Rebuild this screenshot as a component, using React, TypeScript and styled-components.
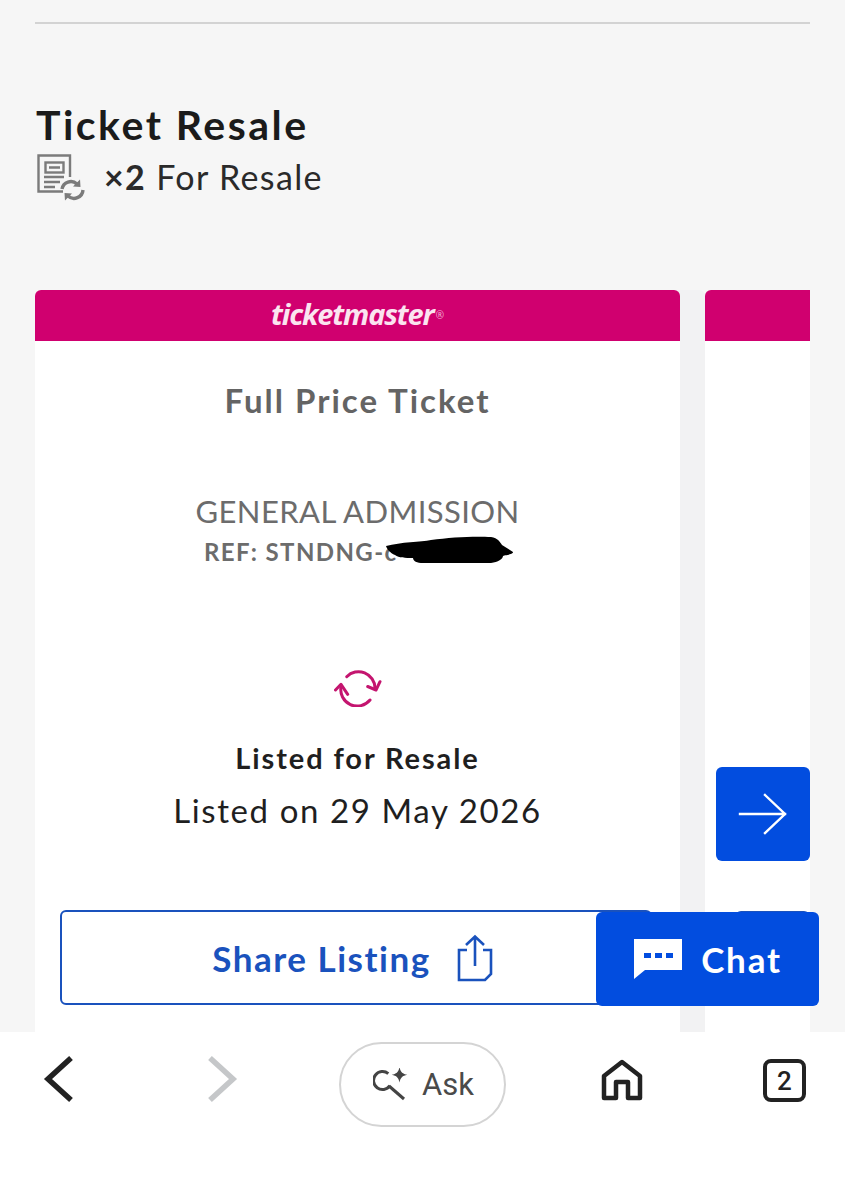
import React from 'react';
import styled, { createGlobalStyle } from 'styled-components';

const GlobalStyle = createGlobalStyle`
  html, body { margin: 0; padding: 0; height: 100%; background: #fff; }
  body { font-family: Lato, "Open Sans", sans-serif; overflow: hidden; }
`;

const ResaleDocIcon = () => (
  <svg width="50" height="50" viewBox="0 0 50 50" fill="none">
    <path d="M27 38.5H2.5V2.5H34V24" stroke="#7b7b7b" strokeWidth="2.4" />
    <rect x="9.5" y="9.5" width="18" height="10" stroke="#7b7b7b" strokeWidth="2.4" />
    <path d="M13 14.5h11M8 24h20M8 29h16M8 34h11" stroke="#7b7b7b" strokeWidth="2.4" />
    <path d="M26 36a9 9 0 0 1 15-5" stroke="#7b7b7b" strokeWidth="3.4" />
    <path d="M37 33.5l7.5 .5-.5-7.5z" fill="#7b7b7b" />
    <path d="M47 37a9 9 0 0 1-15 6" stroke="#7b7b7b" strokeWidth="3.4" />
    <path d="M36 40.5l-7.5-.5 .5 7.5z" fill="#7b7b7b" />
  </svg>
);

const ResaleIcon = () => (
  <svg width="48" height="40" viewBox="0 0 48 40" fill="none" stroke="#c4156f" strokeWidth="3" strokeLinecap="round" strokeLinejoin="round">
    <path d="M12.7 9.700A16.500 16.500 0 0 1 41 21" />
    <path d="M33.700 19.500L42 23l4-8.300" />
    <path d="M7 19.700A16.500 16.500 0 0 0 36 33" />
    <path d="M1.500 23L7 17.300l6.700 10" />
  </svg>
);

const ArrowIcon = () => (
  <svg width="50" height="42" viewBox="0 0 50 42" fill="none" stroke="#fff" strokeWidth="2.4" strokeLinecap="square">
    <path d="M2 21h45M27 2l20 19-20 19" />
  </svg>
);

const ShareIcon = () => (
  <svg width="36" height="48" viewBox="0 0 36 48" fill="none" stroke="#1a52bd" strokeWidth="2.6">
    <path d="M10 16H2v30h26l6-6V16h-8" />
    <path d="M18 32V3M9 11l9-8.500 9 8.500" />
  </svg>
);

const ChatIcon = () => (
  <svg width="50" height="42" viewBox="0 0 50 42">
    <path d="M1 1h48v31H12L1 41z" fill="#fff" />
    <rect x="11" y="15" width="7" height="5" fill="#024ddf" />
    <rect x="22" y="15" width="7" height="5" fill="#024ddf" />
    <rect x="33" y="15" width="7" height="5" fill="#024ddf" />
  </svg>
);

const AskIcon = () => (
  <svg width="35" height="33" viewBox="0 0 35 33" fill="none">
    <path d="M15.300 5.600A9 9 0 1 0 16.900 17.700" stroke="#444" strokeWidth="3" />
    <path d="M16 18L31 31" stroke="#444" strokeWidth="3" />
    <path d="M26.500 -1c1 5 2.800 6.800 7.800 7.800-5 1-6.800 2.800-7.800 7.800-1-5-2.800-6.800-7.800-7.800 5-1 6.800-2.800 7.800-7.800z" fill="#444" />
  </svg>
);

const Chevron = ({ back, color }: { back?: boolean; color: string }) => (
  <svg width="32" height="48" viewBox="0 0 32 48" fill="none" stroke={color} strokeWidth="5.500">
    <path d={back ? 'M28 3L5 24l23 21' : 'M4 3l23 21L4 45'} />
  </svg>
);

const HomeIcon = () => (
  <svg width="42" height="42" viewBox="0 0 42 42" fill="none" stroke="#222" strokeWidth="4.500" strokeLinejoin="round">
    <path d="M3 17L21 3l18 14v22H27V23H15v16H3z" />
  </svg>
);

const Scribble = () => (
  <svg width="130" height="32" viewBox="0 0 130 32">
    <path d="M1 11c15-4 35-4 45-6 20-3 45-4 60-3 7 1 9 5 11 8l11 7c1 3-10 3-10 4 0 3-5 6-12 7H38c-6 0-10-2-10-5-8 0-14 0-18-3C5 18 2 14 1 11z" fill="#000" />
  </svg>
);

export default function App() {
  return (
    <>
      <GlobalStyle />
      <Screen>
        <Main>
          <Divider />
          <Title>Ticket Resale</Title>
          <CountRow>
            <ResaleDocIcon />
            <CountText><b>×2</b> For Resale</CountText>
          </CountRow>
          <Carousel>
            <Card>
              <Brand>
                <BrandName>ticketmaster<Reg>®</Reg></BrandName>
              </Brand>
              <CardBody>
                <TicketType>Full Price Ticket</TicketType>
                <Admission>GENERAL ADMISSION</Admission>
                <RefLine>
                  REF: STNDNG-c
                  <Redaction><Scribble /></Redaction>
                </RefLine>
                <StatusIcon><ResaleIcon /></StatusIcon>
                <StatusTitle>Listed for Resale</StatusTitle>
                <StatusDate>Listed on 29 May 2026</StatusDate>
                <ShareButton>
                  Share Listing
                  <ShareIcon />
                </ShareButton>
              </CardBody>
            </Card>
            <NextCard>
              <Brand />
              <NextCardBody>
                <GhostButton />
              </NextCardBody>
            </NextCard>
            <ArrowButton><ArrowIcon /></ArrowButton>
          </Carousel>
          <ChatButton>
            <ChatIcon />
            Chat
          </ChatButton>
        </Main>
        <BrowserBar>
          <NavSlot><Chevron back color="#222" /></NavSlot>
          <NavSlot><Chevron color="#c5c7c9" /></NavSlot>
          <AskPill>
            <AskIcon />
            Ask
          </AskPill>
          <NavSlot><HomeIcon /></NavSlot>
          <TabCount>2</TabCount>
        </BrowserBar>
      </Screen>
    </>
  );
}

const Screen = styled.div`
  display: flex;
  flex-direction: column;
  height: 1200px;
  overflow: hidden;
`;
const Main = styled.main`
  position: relative;
  height: 1032px;
  flex: none;
  padding: 22px 35px 0;
  box-sizing: border-box;
  background: #f6f6f6;
  overflow: hidden;
`;
const Divider = styled.div`
  height: 2px;
  background: #d3d3d3;
`;
const Title = styled.h1`
  margin: 75px 0 0 1px;
  font-size: 41px;
  line-height: 52px;
  font-weight: 700;
  letter-spacing: 2.5px;
  color: #1b1b1b;
`;
const CountRow = styled.div`
  display: flex;
  align-items: center;
  gap: 18px;
  margin: 2px 0 0 1px;
  height: 50px;
`;
const CountText = styled.span`
  font-size: 34px;
  letter-spacing: 1.35px;
  color: #2a2a2a;
  position: relative;
  top: -2px;
  b { font-weight: 700; }
`;
const Carousel = styled.div`
  position: relative;
  display: flex;
  gap: 25px;
  margin-top: 87px;
  height: 743px;
`;
const Card = styled.article`
  flex: none;
  width: 645px;
  background: #fff;
  border-radius: 6px 6px 0 0;
  overflow: hidden;
  box-shadow: 25px 0 0 #f2f2f3;
`;
const NextCard = styled.article`
  flex: 1;
  background: #fff;
  border-radius: 6px 0 0 0;
  overflow: hidden;
`;
const Brand = styled.div`
  display: flex;
  align-items: center;
  justify-content: center;
  box-sizing: border-box;
  height: 51px;
  padding-bottom: 4px;
  background: #d0006f;
`;
const BrandName = styled.div`
  font-family: "Open Sans", sans-serif;
  font-style: italic;
  font-weight: 700;
  font-size: 29px;
  letter-spacing: -1.15px;
  color: #fbe4f0;
`;
const Reg = styled.sup`
  font-size: 10px;
  font-style: normal;
  font-weight: 400;
  letter-spacing: 0;
  margin-left: 2px;
  vertical-align: 6px;
  color: #f3b5d5;
`;
const CardBody = styled.div`
  display: flex;
  flex-direction: column;
  align-items: center;
  padding: 37px 25px 0;
  text-align: center;
`;
const NextCardBody = styled.div`
  position: relative;
  height: 640px;
`;
const GhostButton = styled.div`
  position: absolute;
  top: 570px;
  left: 30px;
  right: 0;
  height: 90px;
  border: 2px solid #1a52bd;
  border-radius: 6px;
`;
const TicketType = styled.h2`
  margin: 0;
  font-size: 33px;
  line-height: 44px;
  font-weight: 700;
  letter-spacing: 2px;
  color: #646464;
`;
const Admission = styled.div`
  margin-top: 69px;
  font-size: 31px;
  line-height: 40px;
  letter-spacing: 0.4px;
  color: #6c6c6c;
`;
const RefLine = styled.div`
  position: relative;
  margin: 5px 0 0 3px;
  width: 310px;
  text-align: left;
  white-space: nowrap;
  font-size: 24px;
  line-height: 32px;
  font-weight: 700;
  letter-spacing: 1.4px;
  color: #6c6c6c;
`;
const Redaction = styled.span`
  position: absolute;
  left: 181px;
  top: -1px;
  line-height: 0;
`;
const StatusIcon = styled.div`
  margin-top: 99px;
  height: 40px;
  line-height: 0;
`;
const StatusTitle = styled.div`
  margin-top: 33px;
  font-size: 29px;
  line-height: 36px;
  font-weight: 700;
  letter-spacing: 1.9px;
  color: #1f1f1f;
`;
const StatusDate = styled.div`
  margin-top: 13px;
  font-size: 33px;
  line-height: 42px;
  letter-spacing: 1.6px;
  color: #1f1f1f;
`;
const ShareButton = styled.div`
  display: flex;
  align-items: center;
  justify-content: center;
  align-self: flex-start;
  gap: 26px;
  box-sizing: border-box;
  width: 592px;
  height: 95px;
  margin-top: 79px;
  padding-right: 7px;
  background: #fff;
  border: 2px solid #1a52bd;
  border-radius: 6px;
  font-size: 35px;
  font-weight: 700;
  letter-spacing: 1.5px;
  color: #1a52bd;
`;
const ArrowButton = styled.div`
  position: absolute;
  top: 477px;
  right: 0;
  width: 94px;
  height: 94px;
  display: flex;
  align-items: center;
  justify-content: center;
  background: #024ddf;
  border-radius: 6px;
`;
const ChatButton = styled.div`
  position: absolute;
  left: 596px;
  top: 912px;
  width: 223px;
  height: 94px;
  display: flex;
  align-items: center;
  justify-content: center;
  gap: 18px;
  background: #024ddf;
  border-radius: 6px;
  font-size: 35px;
  font-weight: 700;
  letter-spacing: 1.8px;
  color: #fff;
`;
const BrowserBar = styled.nav`
  position: relative;
  flex: 1;
  background: #fff;
`;
const NavSlot = styled.div`
  position: absolute;
  top: 23px;
  line-height: 0;
  &:nth-child(1) { left: 43px; }
  &:nth-child(2) { left: 206px; }
  &:nth-child(4) { left: 601px; top: 27px; }
`;
const AskPill = styled.div`
  position: absolute;
  left: 339px;
  top: 10px;
  box-sizing: border-box;
  width: 167px;
  height: 85px;
  display: flex;
  align-items: center;
  justify-content: center;
  gap: 14px;
  padding-left: 2px;
  border: 2px solid #d4d4d4;
  border-radius: 43px;
  font-family: Roboto, sans-serif;
  font-size: 31px;
  font-weight: 400;
  color: #4a4a4a;
`;
const TabCount = styled.div`
  position: absolute;
  left: 763px;
  top: 27px;
  box-sizing: border-box;
  width: 43px;
  height: 43px;
  display: flex;
  align-items: center;
  justify-content: center;
  border: 4px solid #222;
  border-radius: 8px;
  font-family: Roboto, sans-serif;
  font-size: 26px;
  font-weight: 500;
  color: #222;
`;
